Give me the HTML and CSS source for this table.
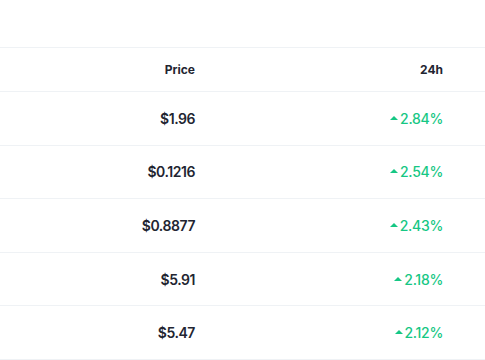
FILE: index.html
```html
<!DOCTYPE html>
<html>
<head>
<meta charset="utf-8">
<link rel="stylesheet" href="styles.css">
</head>
<body>
<div class="table">
  <div class="row head">
    <div class="cell">Price</div>
    <div class="cell">24h</div>
    <div></div>
  </div>
  <div class="row">
    <div class="cell price">$1.96</div>
    <div class="cell change"><span class="tri"></span>2.84%</div>
    <div></div>
  </div>
  <div class="row">
    <div class="cell price">$0.1216</div>
    <div class="cell change"><span class="tri"></span>2.54%</div>
    <div></div>
  </div>
  <div class="row">
    <div class="cell price">$0.8877</div>
    <div class="cell change"><span class="tri"></span>2.43%</div>
    <div></div>
  </div>
  <div class="row">
    <div class="cell price">$5.91</div>
    <div class="cell change"><span class="tri"></span>2.18%</div>
    <div></div>
  </div>
  <div class="row">
    <div class="cell price">$5.47</div>
    <div class="cell change"><span class="tri"></span>2.12%</div>
    <div></div>
  </div>
</div>
</body>
</html>
```
FILE: styles.css
```css
html, body {
  margin: 0;
  padding: 0;
  background: #fff;
}
body {
  font-family: Inter, "Noto Sans", sans-serif;
  color: #222531;
}
.table {
  padding-top: 47px;
}
.row {
  display: grid;
  grid-template-columns: 195px 248px 1fr;
  border-top: 1px solid #eff2f5;
  align-items: center;
  height: 52.6px;
}
.row:last-child {
  border-bottom: 1px solid #eff2f5;
}
.row.head {
  height: 43px;
  font-size: 12px;
  font-weight: 700;
}
.cell {
  text-align: right;
}
.price {
  font-size: 14px;
  font-weight: 600;
  letter-spacing: -0.45px;
}
.change {
  font-size: 14px;
  font-weight: 500;
  letter-spacing: -0.3px;
  color: #16c784;
  display: flex;
  justify-content: flex-end;
  align-items: center;
}
.tri {
  width: 0;
  height: 0;
  border-left: 4px solid transparent;
  border-right: 4px solid transparent;
  border-bottom: 4px solid #16c784;
  margin-right: 2px;
  margin-top: -1px;
}
```
